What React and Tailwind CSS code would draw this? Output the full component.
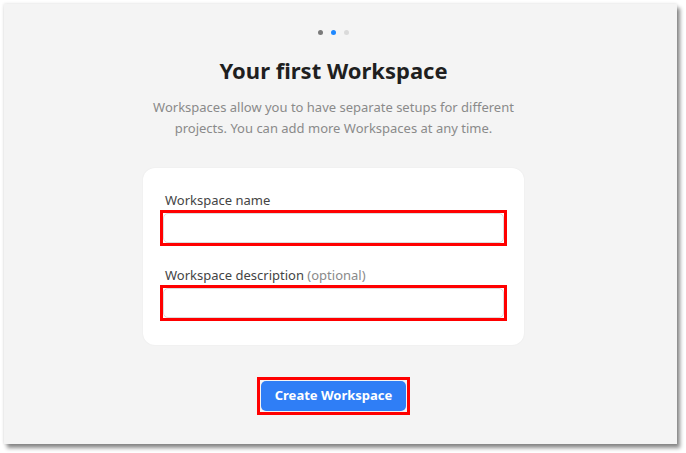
import React from "react";

function Field({ label, hint }) {
  return (
    <div className="flex flex-col">
      <label className="pl-[5px] text-[13px] leading-[18px] text-[#444]">
        {label}
        {hint ? <span className="text-[#8a8a8a]"> {hint}</span> : null}
      </label>
      <div className="mt-[1px] border-[3px] border-[#ff0000]">
        <input
          type="text"
          className="block h-[30px] w-full rounded-[5px] border border-[#dcdcdc] bg-white px-2 text-[13px] outline-none"
        />
      </div>
    </div>
  );
}

export default function App() {
  return (
    <div className="h-[453px] w-[686px] bg-white p-[4px] font-['Noto_Sans','Open_Sans',sans-serif]">
      <div className="flex h-[440px] w-[673px] flex-col items-center bg-[#f4f4f4] pr-[14px] pt-[26px] shadow-[3px_4px_4px_rgba(0,0,0,0.45),0_0_3px_rgba(0,0,0,0.15)]">
        <div className="flex items-center gap-[8px]">
          <span className="h-[5px] w-[5px] rounded-full bg-[#7a7a7a]" />
          <span className="h-[5px] w-[5px] rounded-full bg-[#1e88ff]" />
          <span className="h-[5px] w-[5px] rounded-full bg-[#dadada]" />
        </div>

        <h1 className="mt-[21px] text-[22px] font-bold leading-[29px] text-[#1f1f1f]">
          Your first Workspace
        </h1>

        <p className="mt-[12px] w-[380px] text-center text-[13px] leading-[21px] text-[#8a8a8a]">
          Workspaces allow you to have separate setups for different projects. You can add more Workspaces at any
          time.
        </p>

        <div className="mt-[29px] flex w-[381px] flex-col gap-[20px] rounded-[12px] bg-white px-[17px] pb-[24px] pt-[23px] shadow-[0_0_2px_rgba(0,0,0,0.06)]">
          <Field label="Workspace name" />
          <Field label="Workspace description" hint="(optional)" />
        </div>

        <div className="mt-[32px] border-[3px] border-[#ff0000] p-px">
          <button className="h-[30px] rounded-[5px] bg-[#2f7ef6] px-[14px] text-[13px] font-bold text-white">
            Create Workspace
          </button>
        </div>
      </div>
    </div>
  );
}
